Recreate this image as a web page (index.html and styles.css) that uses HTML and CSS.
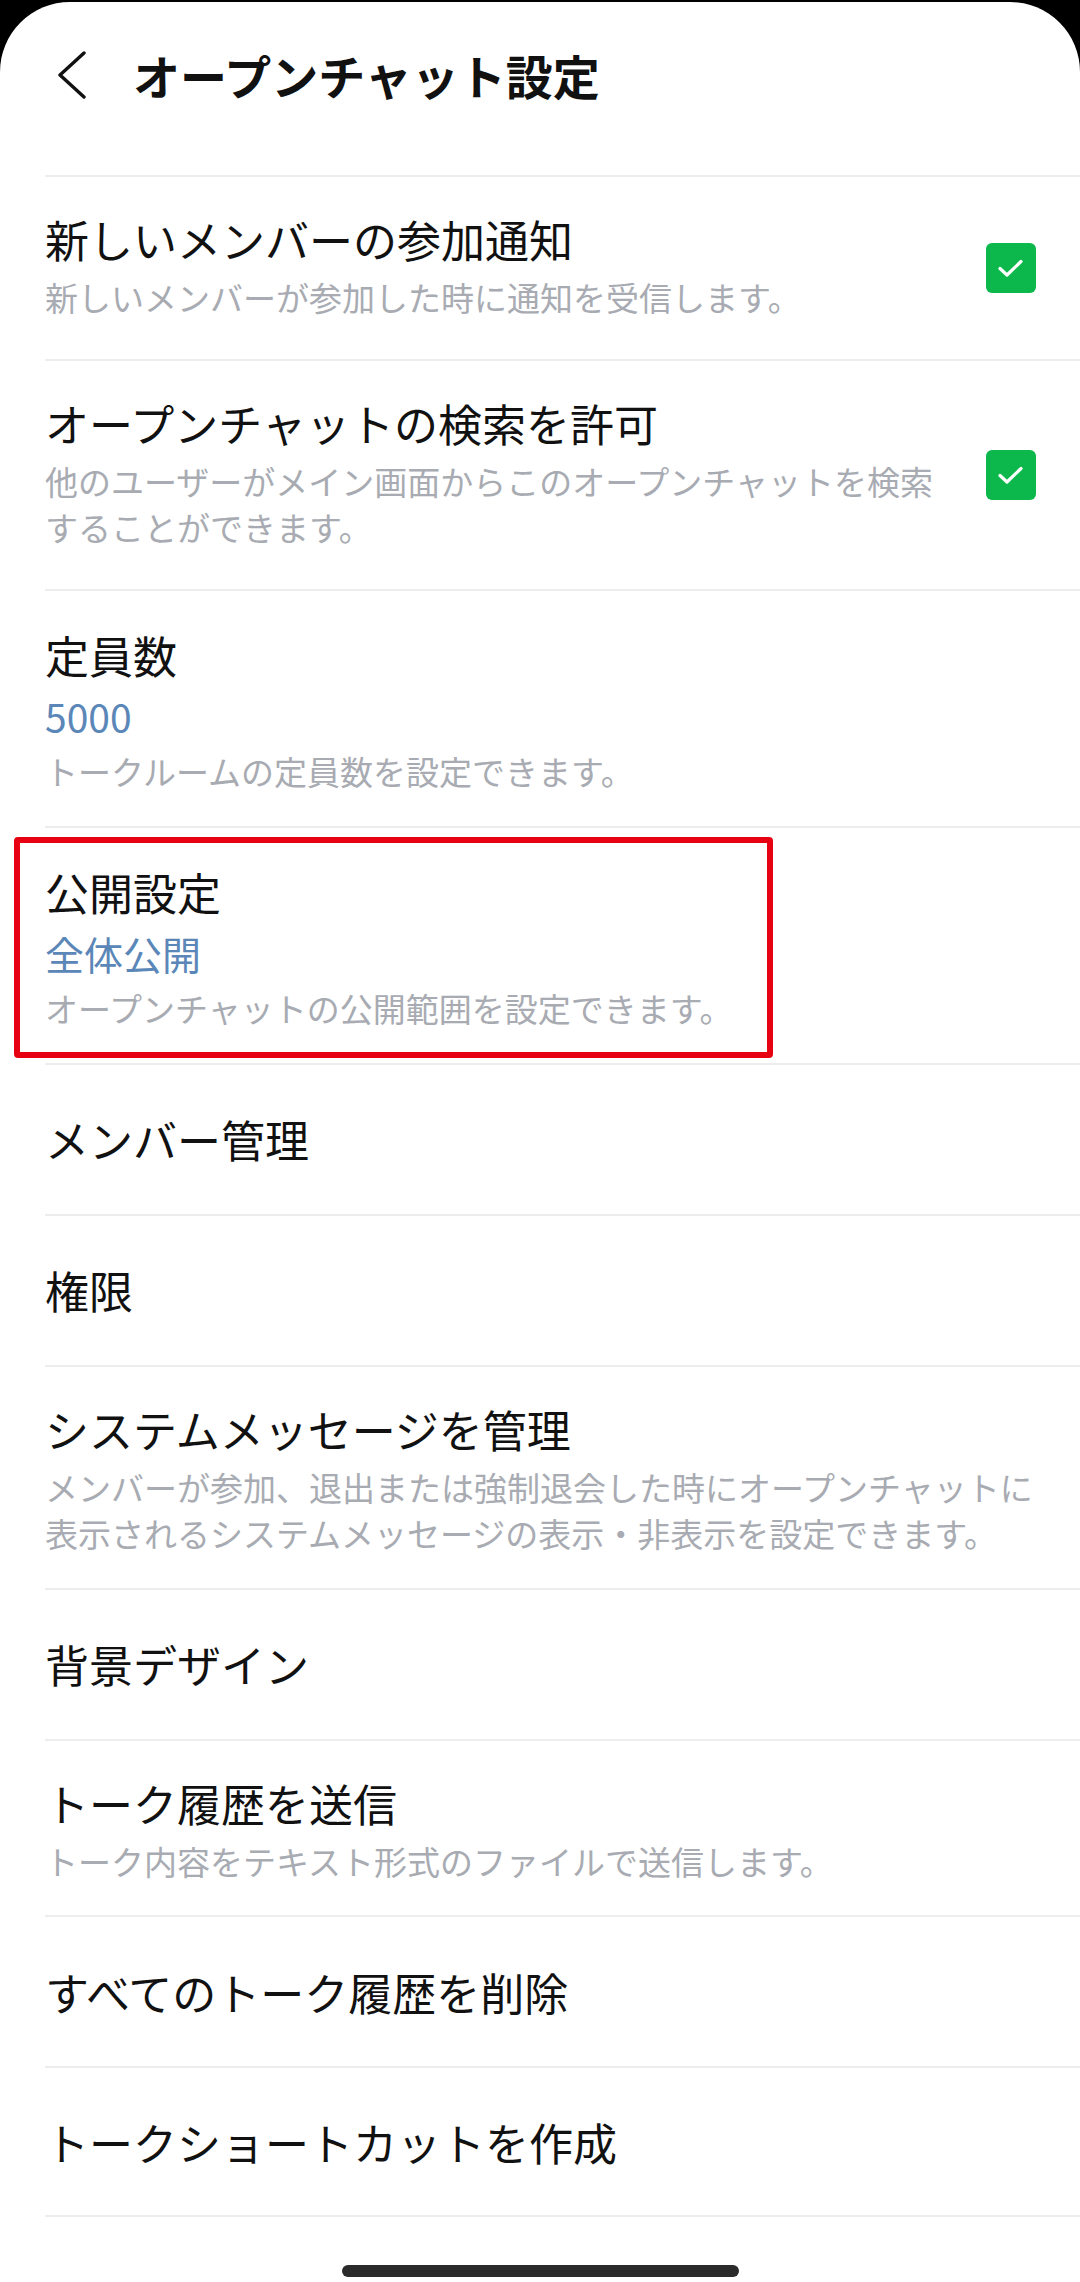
FILE: index.html
```html
<!DOCTYPE html>
<html lang="ja">
<head>
<meta charset="utf-8">
<title>オープンチャット設定</title>
<link rel="stylesheet" href="styles.css">
</head>
<body>
<div class="screen">
  <header class="topbar">
    <svg class="back" viewBox="0 0 30 48" aria-hidden="true"><polyline points="27,2 3,24 27,46" /></svg>
    <h1 class="title">オープンチャット設定</h1>
  </header>
  <ul class="list">
    <li class="row row-check">
      <div class="text">
        <div class="label">新しいメンバーの参加通知</div>
        <div class="desc">新しいメンバーが参加した時に通知を受信します。</div>
      </div>
      <span class="checkbox"><svg viewBox="0 0 50 50" aria-hidden="true"><polyline points="14,25.5 21,32 35,18.5" /></svg></span>
    </li>
    <li class="row row-check">
      <div class="text">
        <div class="label">オープンチャットの検索を許可</div>
        <div class="desc">他のユーザーがメイン画面からこのオープンチャットを検索<br>することができます。</div>
      </div>
      <span class="checkbox"><svg viewBox="0 0 50 50" aria-hidden="true"><polyline points="14,25.5 21,32 35,18.5" /></svg></span>
    </li>
    <li class="row row-value">
      <div class="text">
        <div class="label">定員数</div>
        <div class="value">5000</div>
        <div class="desc">トークルームの定員数を設定できます。</div>
      </div>
    </li>
    <li class="row row-value">
      <div class="text">
        <div class="label">公開設定</div>
        <div class="value">全体公開</div>
        <div class="desc">オープンチャットの公開範囲を設定できます。</div>
      </div>
      <span class="highlight"></span>
    </li>
    <li class="row">
      <div class="text"><div class="label">メンバー管理</div></div>
    </li>
    <li class="row">
      <div class="text"><div class="label">権限</div></div>
    </li>
    <li class="row">
      <div class="text">
        <div class="label">システムメッセージを管理</div>
        <div class="desc">メンバーが参加、退出または強制退会した時にオープンチャットに<br>表示されるシステムメッセージの表示・非表示を設定できます。</div>
      </div>
    </li>
    <li class="row">
      <div class="text"><div class="label">背景デザイン</div></div>
    </li>
    <li class="row">
      <div class="text">
        <div class="label">トーク履歴を送信</div>
        <div class="desc">トーク内容をテキスト形式のファイルで送信します。</div>
      </div>
    </li>
    <li class="row">
      <div class="text"><div class="label">すべてのトーク履歴を削除</div></div>
    </li>
    <li class="row">
      <div class="text"><div class="label">トークショートカットを作成</div></div>
    </li>
  </ul>
  <div class="home"><span class="home-bar"></span></div>
</div>
</body>
</html>
```
FILE: styles.css
```css
html, body {
  margin: 0;
  padding: 0;
  height: 2282px;
  overflow: hidden;
  background: #000;
}

.screen {
  background: #fff;
  margin-top: 2px;
  height: 2280px;
  border-radius: 70px 70px 0 0;
  overflow: hidden;
  font-family: "Noto Sans CJK JP", "Noto Sans", sans-serif;
  color: #111;
}

.topbar {
  display: flex;
  align-items: center;
  height: 146px;
  padding-left: 57px;
}

.back {
  width: 30px;
  height: 48px;
  flex: none;
}

.back polyline {
  fill: none;
  stroke: #111;
  stroke-width: 3.4;
  stroke-linecap: round;
  stroke-linejoin: round;
}

.title {
  margin: 0 0 0 46px;
  font-size: 47px;
  font-weight: 700;
  line-height: 62px;
  color: #111;
}

.list {
  list-style: none;
  margin: 27px 0 0 45px;
  padding: 0;
}

.row {
  position: relative;
  display: flex;
  align-items: center;
  box-sizing: border-box;
  min-height: 151px;
  padding: 31px 44px 31px 0;
  border-top: 2px solid #ededed;
}

.row:last-child {
  border-bottom: 2px solid #ededed;
}

.row-check {
  padding-bottom: 38px;
}

.row-value {
  padding-top: 33px;
  padding-bottom: 31.5px;
}

.text {
  flex: 1;
  min-width: 0;
}

.label {
  font-size: 44px;
  line-height: 62px;
  color: #111;
}

.value {
  margin-top: 2px;
  font-size: 39px;
  line-height: 56px;
  color: #5b87b8;
}

.desc {
  margin-top: 4px;
  font-size: 33px;
  line-height: 46.5px;
  color: #a8abb2;
}

.checkbox {
  flex: none;
  width: 50px;
  height: 50px;
  margin-left: 40px;
  margin-top: 8px;
  border-radius: 6px;
  background: #0cb84b;
  display: flex;
  align-items: center;
  justify-content: center;
}

.checkbox svg {
  width: 50px;
  height: 50px;
}

.checkbox polyline {
  fill: none;
  stroke: #fff;
  stroke-width: 3.2;
  stroke-linecap: round;
  stroke-linejoin: round;
}

.highlight {
  position: absolute;
  top: 9px;
  bottom: 5px;
  left: -31px;
  width: 759px;
  box-sizing: border-box;
  border: 6px solid #e60012;
  border-radius: 4px;
  pointer-events: none;
}

.home {
  display: flex;
  justify-content: center;
  align-items: flex-end;
  height: 60px;
}

.home-bar {
  width: 397px;
  height: 12px;
  border-radius: 6px;
  background: #2b2b2b;
}
```
